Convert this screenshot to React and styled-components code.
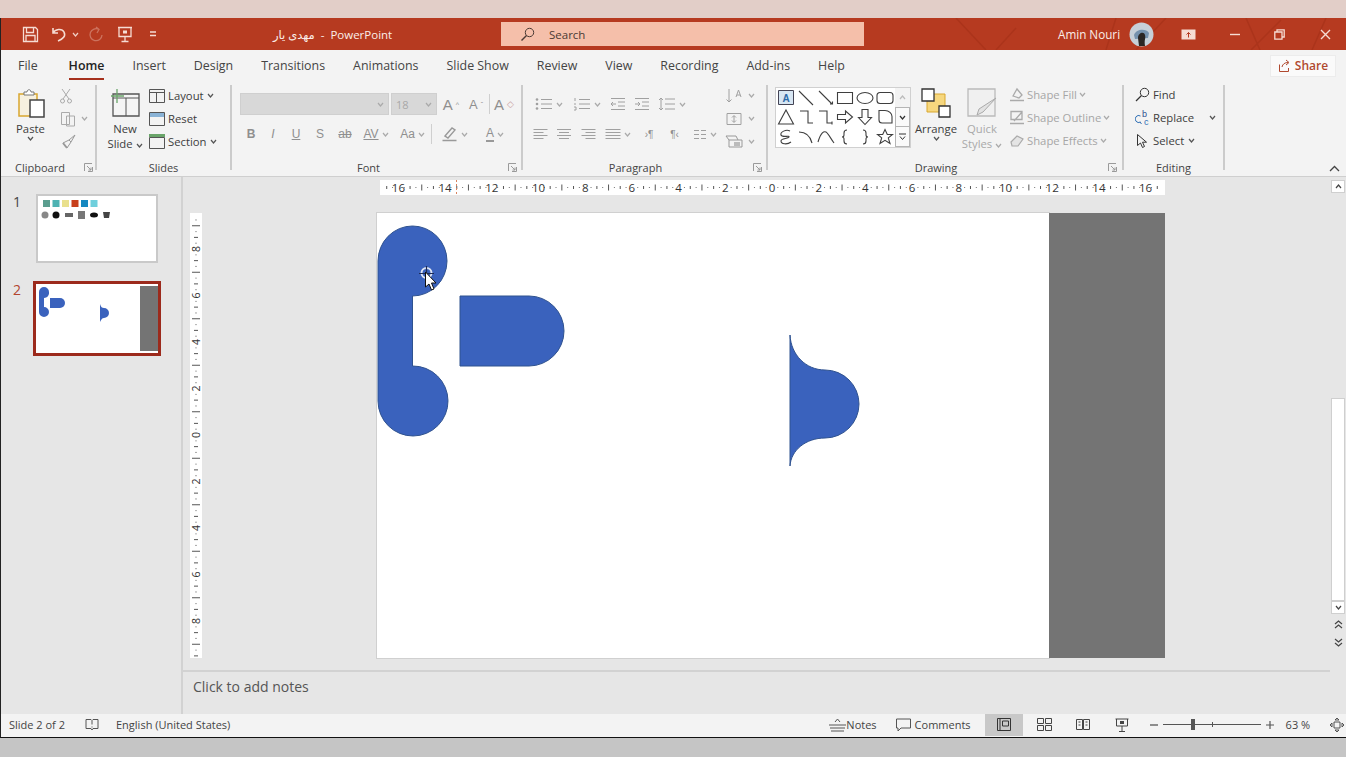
import React from 'react';
import styled, { createGlobalStyle } from 'styled-components';

const GlobalStyle = createGlobalStyle`
  html, body {
    margin: 0;
    padding: 0;
    height: 757px;
    overflow: hidden;
    background: #c5c5c5;
    font-family: "Open Sans", "DejaVu Sans", sans-serif;
  }
`;

const TopBand = styled.div`
  height: 18px;
  background: #e2cec8;
`;

const Window = styled.div`
  height: 719px;
  display: flex;
  flex-direction: column;
  border-left: 1px solid #222;
  border-bottom: 1px solid #111;
  box-sizing: content-box;
  background: #f3f3f3;
`;

/* title bar */
const TitleBar = styled.div`
  position: relative;
  height: 32px;
  flex: none;
  display: flex;
  align-items: center;
  background: #b63a20;
  color: #fbeee9;
  font-size: 11.5px;
  overflow: hidden;
`;

const Streaks = styled.svg`
  position: absolute;
  right: 0;
  top: 0;
  pointer-events: none;
`;

const Qat = styled.div`
  width: 272px;
  flex: none;
  display: flex;
  align-items: center;
  position: relative;
`;

const QatItem = styled.div`
  width: ${p => p.$w}px;
  margin-left: ${p => p.$ml || 0}px;
  flex: none;
  display: flex;
  justify-content: center;
  align-items: center;
  opacity: ${p => (p.$faded ? 0.35 : 1)};
`;

const DocTitle = styled.div`
  width: 228px;
  flex: none;
  white-space: pre;
  position: relative;
`;

const SearchBox = styled.div`
  position: relative;
  width: 363px;
  height: 24px;
  flex: none;
  display: flex;
  align-items: center;
  gap: 14px;
  padding-left: 19px;
  box-sizing: border-box;
  background: #f5bfaa;
  color: #4b3a34;
`;

const UserName = styled.div`
  position: relative;
  margin-left: 194px;
  width: 70px;
  flex: none;
  font-size: 11.7px;
`;

const WinBtn = styled.div`
  position: relative;
  width: ${p => p.$w}px;
  flex: none;
  display: flex;
  justify-content: center;
  align-items: center;
`;

/* tabs */
const TabRow = styled.div`
  height: 30px;
  flex: none;
  display: flex;
  align-items: center;
  padding: 1px 0 0 17px;
  box-sizing: border-box;
  font-size: 12.4px;
  color: #444;
`;

const Tab = styled.div`
  position: relative;
  margin-right: ${p => (p.$first ? 31 : 28)}px;
  white-space: nowrap;
  color: ${p => (p.$active ? '#222' : '#444')};
  font-weight: ${p => (p.$active ? 600 : 400)};

  &::after {
    content: '';
    display: ${p => (p.$active ? 'block' : 'none')};
    position: absolute;
    left: 0;
    right: 0;
    bottom: -6px;
    height: 2px;
    background: #a5301c;
  }
`;

const ShareBtn = styled.div`
  margin-left: auto;
  margin-right: 10px;
  width: 66px;
  height: 22px;
  display: flex;
  align-items: center;
  justify-content: center;
  gap: 4px;
  box-sizing: border-box;
  background: #fafafa;
  border: 1px solid #ececec;
  color: #b0492f;
  font-weight: 600;
  font-size: 12px;
`;

/* ribbon */
const Ribbon = styled.div`
  position: relative;
  height: 97px;
  flex: none;
  display: flex;
  background: #f3f3f3;
  border-bottom: 1px solid #cfcfcf;
  box-sizing: border-box;
  font-size: 11.3px;
  color: #3d3d3d;
`;

const Group = styled.div`
  width: ${p => p.$w}px;
  flex: none;
  display: flex;
  flex-direction: column;
`;

const GroupBody = styled.div`
  height: 78px;
  flex: none;
  display: flex;
  padding-left: ${p => p.$pl || 0}px;
  box-sizing: border-box;
`;

const GroupLabel = styled.div`
  position: relative;
  height: 19px;
  line-height: 19px;
  text-align: center;
  padding-right: ${p => p.$pr || 0}px;
  font-size: 11px;
  color: #444;
`;

const Launcher = styled.svg`
  position: absolute;
  right: ${p => p.$r || 4}px;
  top: 5px;
`;

const Sep = styled.div`
  width: 2px;
  flex: none;
  margin: 5px 0 6px;
  background: #cbcbcb;
`;

const BigBtn = styled.div`
  width: ${p => p.$w}px;
  flex: none;
  padding-top: 8px;
  display: flex;
  flex-direction: column;
  align-items: center;
  line-height: 15px;
  color: ${p => (p.$off ? '#a9a9a9' : '#3d3d3d')};
  white-space: nowrap;

  & > svg:first-child {
    margin-bottom: 3px;
  }
`;

const Stack = styled.div`
  flex: none;
  width: ${p => (p.$w ? `${p.$w}px` : 'auto')};
  margin-left: ${p => p.$ml || 0}px;
  padding-top: ${p => p.$pt ?? 4}px;
  display: flex;
  flex-direction: column;
`;

const SmallRow = styled.div`
  height: 23px;
  display: flex;
  align-items: center;
  gap: ${p => p.$gap ?? 3}px;
  white-space: nowrap;
  color: ${p => (p.$off ? '#a6a6a6' : '#3d3d3d')};
`;

const ToolRows = styled.div`
  flex: none;
  width: ${p => p.$w}px;
  padding-top: 13px;
  display: flex;
  flex-direction: column;
  gap: 8px;
`;

const ToolRow = styled.div`
  height: 22px;
  display: flex;
  align-items: center;
`;

const Combo = styled.div`
  width: ${p => p.$w}px;
  height: 22px;
  flex: none;
  margin-right: 2px;
  display: flex;
  align-items: center;
  justify-content: space-between;
  padding: 0 4px;
  box-sizing: border-box;
  background: #d8d8d8;
  border: 1px solid #cfcfcf;
  color: #a8a8a8;
  font-size: 11px;
`;

const Cell = styled.div`
  width: ${p => p.$w}px;
  flex: none;
  display: flex;
  align-items: center;
  justify-content: center;
  gap: 3px;
  color: #8f8f8f;
  font-size: ${p => p.$fs || 12}px;
  font-weight: ${p => p.$fw || 400};
  font-style: ${p => (p.$it ? 'italic' : 'normal')};
  font-family: "Liberation Sans", sans-serif;
  text-decoration: ${p => p.$deco || 'none'};
`;

const ThinSep = styled.div`
  width: 1px;
  height: 20px;
  flex: none;
  background: #cfcfcf;
`;

const Gallery = styled.div`
  margin-top: 7px;
  width: 136px;
  height: 61px;
  flex: none;
  display: flex;
  background: #fff;
  border: 1px solid #d0d0d0;
  box-sizing: border-box;
`;

const GalleryGrid = styled.div`
  width: 119px;
  flex: none;
  display: grid;
  grid-template-columns: repeat(6, 1fr);
  grid-template-rows: repeat(3, 1fr);
  justify-items: center;
  align-items: center;
`;

const GalleryScroll = styled.div`
  flex: 1;
  display: flex;
  flex-direction: column;
  background: #f3f3f3;
`;

const ScrollChip = styled.div`
  flex: 1;
  display: flex;
  align-items: center;
  justify-content: center;
  border: 1px solid ${p => (p.$plain ? 'transparent' : '#b5b5b5')};
  margin-top: -1px;
  background: ${p => (p.$plain ? 'transparent' : '#fafafa')};
`;

const Collapse = styled.svg`
  position: absolute;
  right: 6px;
  bottom: 4px;
`;

/* work area */
const Work = styled.div`
  flex: 1;
  min-height: 0;
  display: flex;
  background: #e6e6e6;
`;

const ThumbPane = styled.div`
  width: 182px;
  flex: none;
  display: flex;
  flex-direction: column;
  padding-top: 17px;
  box-sizing: border-box;
  border-right: 2px solid #d2d2d2;
`;

const ThumbRow = styled.div`
  display: flex;
  margin-top: ${p => p.$mt || 0}px;
`;

const ThumbNo = styled.div`
  width: ${p => p.$w}px;
  flex: none;
  padding: ${p => p.$pt || 0}px 0 0 12px;
  box-sizing: border-box;
  font-size: 14px;
  line-height: 16px;
  color: ${p => (p.$active ? '#b2452e' : '#444')};
`;

const Thumb = styled.div`
  position: relative;
  width: ${p => p.$w}px;
  height: ${p => p.$h}px;
  flex: none;
  box-sizing: border-box;
  background: #fff;
  border: ${p => (p.$active ? '3px solid #9c2a1c' : '2px solid #c9c9c9')};
`;

const Main = styled.div`
  flex: 1;
  min-width: 0;
  display: flex;
  flex-direction: column;
`;

const Editor = styled.div`
  flex: 1;
  min-height: 0;
  padding-top: 3px;
  box-sizing: border-box;
  display: flex;
  flex-direction: column;
`;

const HRulerWrap = styled.div`
  margin-left: 197px;
  height: 15px;
  flex: none;
`;

const Stage = styled.div`
  display: flex;
  margin-top: 18px;
  padding-left: 7px;
`;

const VRulerWrap = styled.div`
  width: 12px;
  height: 445px;
  flex: none;
  margin-right: 175px;
`;

const SlideArea = styled.div`
  position: relative;
  width: 788px;
  height: 445px;
  flex: none;
  display: flex;
`;

const Slide = styled.div`
  width: 672px;
  flex: none;
  background: #fff;
  box-shadow: 0 0 0 1px #d0d0d0;
`;

const GreyBlock = styled.div`
  flex: 1;
  background: #747474;
`;

const Shapes = styled.svg`
  position: absolute;
  left: 0;
  top: 0;
`;

const Notes = styled.div`
  height: 44px;
  flex: none;
  padding: 5px 0 0 10px;
  box-sizing: border-box;
  border-top: 2px solid #d2d2d2;
  font-size: 14px;
  line-height: 20px;
  color: #555;
`;

const VScroll = styled.div`
  width: 16px;
  flex: none;
  display: flex;
  flex-direction: column;
  align-items: center;
  padding-top: 3px;
  box-sizing: border-box;
`;

const ScrollBtn = styled.div`
  width: 14px;
  height: 13px;
  flex: none;
  display: flex;
  align-items: center;
  justify-content: center;
  background: #fff;
  border: 1px solid #cfcfcf;
  box-sizing: border-box;
`;

const ScrollThumb = styled.div`
  width: 14px;
  height: 203px;
  flex: none;
  margin-top: 205px;
  background: #fff;
  border: 1px solid #cfcfcf;
  box-sizing: border-box;
`;

const PageJump = styled.div`
  flex: none;
  margin-top: ${p => p.$mt}px;
  line-height: 0;
`;

/* status bar */
const Status = styled.div`
  height: 23px;
  flex: none;
  display: flex;
  align-items: center;
  padding-bottom: 2px;
  background: #f3f3f3;
  box-sizing: border-box;
  font-size: 11px;
  color: #444;
`;

const StatusText = styled.div`
  flex: none;
  white-space: nowrap;
  width: ${p => (p.$w ? `${p.$w}px` : 'auto')};
  margin-left: ${p => p.$ml || 0}px;
`;

const StatusIcon = styled.div`
  flex: none;
  display: flex;
  align-items: center;
  justify-content: center;
  height: 22px;
  width: ${p => p.$w}px;
  margin-left: ${p => p.$ml || 0}px;
  background: ${p => (p.$on ? '#c8c8c8' : 'transparent')};
`;

const Zoom = styled.div`
  position: relative;
  width: 98px;
  height: 1px;
  flex: none;
  margin-left: 4px;
  background: #555;
`;

const ZoomKnob = styled.div`
  position: absolute;
  left: ${p => p.$x}px;
  top: ${p => -p.$h / 2}px;
  width: ${p => p.$w}px;
  height: ${p => p.$h}px;
  background: #555;
`;

/* drawings */
const S = ({ w = 16, h = 16, vb, children }) => (
  <svg width={w} height={h} viewBox={vb || `0 0 ${w} ${h}`} fill="none" stroke="currentColor" strokeWidth="1">
    {children}
  </svg>
);

const Chev = ({ c = '#555', up }) => (
  <svg width="7" height="5" viewBox="0 0 7 5" fill="none" stroke={c} strokeWidth="1.2">
    <path d={up ? 'M1 4l2.5-3L6 4' : 'M1 1l2.5 3L6 1'} />
  </svg>
);

const Launch = ({ r }) => (
  <Launcher $r={r} width="9" height="9" viewBox="0 0 9 9" fill="none" stroke="#9a9a9a" strokeWidth="1">
    <path d="M.5 8V.5H8M8.5 4v4.5H4M3 3l4 4M7 4.5V7H4.5" />
  </Launcher>
);

const lines = (arr, color = '#a0a0a0') => (
  <g stroke={color}>{arr.map((d, i) => <path key={i} d={d} />)}</g>
);

const Bullets = () => (
  <S w={18} h={14}>
    <g fill="#a0a0a0" stroke="none">
      <circle cx="2" cy="2.5" r="1.3" /><circle cx="2" cy="7" r="1.3" /><circle cx="2" cy="11.5" r="1.3" />
    </g>
    {lines(['M6 2.5h11', 'M6 7h11', 'M6 11.5h11'])}
  </S>
);

const Numbers = () => (
  <S w={18} h={14}>
    {lines(['M2 1v3M1 7h2M1 10h2v3H1', 'M6 2.5h11', 'M6 7h11', 'M6 11.5h11'])}
  </S>
);

const Outdent = ({ flip }) => (
  <S w={16} h={14}>
    {lines(['M1 1.5h14', 'M1 12.5h14', 'M8 5h7', 'M8 9h7', flip ? 'M1 7h5M4 5l2 2-2 2' : 'M6 7H1M3 5L1 7l2 2'])}
  </S>
);

const Spacing = () => (
  <S w={18} h={16}>
    {lines(['M3 2v12M1 4l2-2 2 2M1 12l2 2 2-2', 'M7 3h10', 'M7 8h10', 'M7 13h10'])}
  </S>
);

const Align = ({ mode }) => {
  const w = [14, 10, 14, 10];
  return (
    <S w={16} h={12}>
      {lines(w.map((l, i) => {
        const y = 1.5 + i * 3;
        const len = mode === 'j' ? 15 : l;
        const x = mode === 'c' ? (16 - len) / 2 : mode === 'r' ? 15.5 - len : 0.5;
        return `M${x} ${y}h${len}`;
      }))}
    </S>
  );
};

const Shape = ({ d, fill }) => (
  <svg width="18" height="18" viewBox="0 0 18 18" fill={fill || 'none'} stroke="#3f3f3f" strokeWidth="1.1">
    <path d={d} />
  </svg>
);

const galleryShapes = [
  null,
  'M2 2l14 14',
  'M2 2l13 13M13 15h2.5v-2.5',
  'M1.5 3.5h15v11h-15z',
  'M9 3.5c4.5 0 8 2.5 8 5.5s-3.5 5.5-8 5.5S1 12 1 9s3.5-5.5 8-5.5z',
  'M4 3.5h10a3 3 0 0 1 3 3v5a3 3 0 0 1-3 3H4a3 3 0 0 1-3-3v-5a3 3 0 0 1 3-3z',
  'M9 2l7.5 14h-15z',
  'M3 3h8v12h5',
  'M2 3h8v12h5M15 13.5v3',
  'M1.5 6.5h8V3L16.5 9l-7 6v-3.5h-8z',
  'M6 1.5h6v8h3.5L9 16.5 2.5 9.5H6z',
  'M3 2.5h6c4 0 7 3 7 6v6.500H6c-2 0-3-1-3-3z',
  'M13 3C9 1 3 4 4 7s9 0 8 2-8 1-8 4 6 4 10 1',
  'M2 4c7 0 11 3 13 11',
  'M1 14C4 4 7 3 9 4s5 7 8 11',
  'M11 2C9 2 8 3 8 5v2c0 1-1 2-2 2 1 0 2 1 2 2v2c0 2 1 3 3 3',
  'M7 2c2 0 3 1 3 3v2c0 1 1 2 2 2-1 0-2 1-2 2v2c0 2-1 3-3 3',
  'M9 1.5l2.3 5h5.2l-4.2 3.4 1.7 5.6L9 12.3l-5 3.2 1.7-5.6L1.5 6.5h5.2z',
];

const tabs = ['Insert', 'Design', 'Transitions', 'Animations', 'Slide Show', 'Review', 'View', 'Recording', 'Add-ins', 'Help'];

const HRuler = () => {
  const ticks = [];
  const labels = [];
  const mid = 392;
  const unit = 23.35;
  for (let i = -68; i <= 68; i++) {
    const x = mid + (i * unit) / 4;
    if (x < 2 || x > 783) continue;
    if (i % 8 === 0) {
      labels.push(
        <text key={i} x={x} y="11.5" textAnchor="middle" fontSize="11.5" fill="#333" stroke="none">
          {Math.abs(i / 4)}
        </text>
      );
    } else if (i % 4 === 0) {
      ticks.push(<path key={i} d={`M${x} 4.5v6`} stroke="#555" />);
    } else if (i % 2 === 0) {
      ticks.push(<path key={i} d={`M${x} 6v3`} stroke="#555" />);
    } else {
      ticks.push(<circle key={i} cx={x} cy="7.5" r=".6" fill="#666" stroke="none" />);
    }
  }
  return (
    <svg width="785" height="15" viewBox="0 0 785 15" style={{ display: 'block', background: '#fff' }}>
      {ticks}
      {labels}
      <path d="M76.5 0v15" stroke="#d9825f" strokeDasharray="2 2" />
    </svg>
  );
};

const VRuler = () => {
  const ticks = [];
  const labels = [];
  const mid = 222;
  const unit = 23.25;
  for (let i = -38; i <= 38; i++) {
    const y = mid + (i * unit) / 4;
    if (y < 2 || y > 443) continue;
    if (i % 8 === 0) {
      labels.push(
        <text key={i} x="0" y="0" transform={`translate(10 ${y}) rotate(-90)`} textAnchor="middle" fontSize="10.5" fill="#333" stroke="none">
          {Math.abs(i / 4)}
        </text>
      );
    } else if (i % 4 === 0) {
      ticks.push(<path key={i} d={`M2 ${y}h8`} stroke="#555" />);
    } else if (i % 2 === 0) {
      ticks.push(<path key={i} d={`M4 ${y}h4`} stroke="#555" />);
    } else {
      ticks.push(<circle key={i} cx="6" cy={y} r=".6" fill="#666" stroke="none" />);
    }
  }
  return (
    <svg width="12" height="445" viewBox="0 0 12 445" style={{ display: 'block', background: '#fff', overflow: 'visible' }}>
      {ticks}
      {labels}
    </svg>
  );
};

export default function App() {
  return (
    <>
      <GlobalStyle />
      <TopBand />
      <Window>
        <TitleBar>
          <Streaks width="480" height="32" viewBox="0 0 480 32" fill="none" stroke="#ab341b" strokeWidth="1.5">
            <path d="M90 0l30 32M150 10l-20 22M250 0l-10 32M300 0l-30 32M380 0l14 32M385 32l30-30M460 0l-14 32" />
          </Streaks>
          <Qat>
            <QatItem $w={17} $ml={21}>
              <S w={17} h={17}>
                <path d="M1.5 1.5h12l2 2v12h-14zM4.5 1.5v5h7v-5M4 15.5v-6h9v6" stroke="#f6dcd3" strokeWidth="1.3" />
              </S>
            </QatItem>
            <QatItem $w={18} $ml={10}>
              <S w={17} h={16}>
                <path d="M3 2v5h5M3 7c2-4 9-5 11-1s-1 7-6 9" stroke="#f6dcd3" strokeWidth="1.6" />
              </S>
            </QatItem>
            <QatItem $w={10} $ml={3}><Chev c="#f0cfc5" /></QatItem>
            <QatItem $w={18} $ml={7} $faded>
              <S w={17} h={17}>
                <path d="M14 9a6 6 0 1 1-3-5.5M8 1l3 2.5L9 7" stroke="#f6dcd3" strokeWidth="1.3" />
              </S>
            </QatItem>
            <QatItem $w={18} $ml={11}>
              <S w={16} h={17}>
                <path d="M1 1.5h14M2 1.5v9h12v-9M8 10.5v5M4.5 15.5h7" stroke="#f6dcd3" strokeWidth="1.3" />
                <path d="M6 4.5h4v3H6z" fill="#f6dcd3" stroke="none" />
              </S>
            </QatItem>
            <QatItem $w={18} $ml={10}>
              <S w={8} h={8}>
                <path d="M1 2h6M1 5.5h6" stroke="#f6dcd3" strokeWidth="1.3" />
              </S>
            </QatItem>
          </Qat>
          <DocTitle><span dir="rtl">مهدی یار</span>{'  -  PowerPoint'}</DocTitle>
          <SearchBox>
            <S w={15} h={15}>
              <circle cx="9.5" cy="5.5" r="4.2" stroke="#4b3a34" />
              <path d="M6.5 8.5L1.5 13.5" stroke="#4b3a34" strokeWidth="1.4" />
            </S>
            Search
          </SearchBox>
          <UserName>Amin Nouri</UserName>
          <WinBtn $w={27}>
            <svg width="25" height="25" viewBox="0 0 25 25">
              <circle cx="12.5" cy="12.5" r="12" fill="#c6d0d8" />
              <path d="M5 13c2-6 12-7 15-2l-1 5-13 1z" fill="#7592ad" />
              <path d="M10 24l-1-8c0-5 6-7 7-3s-1 4 0 11z" fill="#2a2623" />
            </svg>
          </WinBtn>
          <WinBtn $w={66}>
            <S w={15} h={11}>
              <path d="M.5.5h14v10H.5z" fill="#f6dcd3" stroke="none" />
              <path d="M7.5 8.5v-5M5.5 5.5l2-2 2 2" stroke="#b63a20" />
            </S>
          </WinBtn>
          <WinBtn $w={28}>
            <S w={10} h={3}><path d="M0 1.5h10" stroke="#f6dcd3" strokeWidth="1.4" /></S>
          </WinBtn>
          <WinBtn $w={60}>
            <S w={11} h={11}>
              <path d="M.8 3h7.2v7.2H.8zM3 3V.8h7.2V8H8" stroke="#f6dcd3" strokeWidth="1.3" />
            </S>
          </WinBtn>
          <WinBtn $w={32}>
            <S w={11} h={11}>
              <path d="M1 1l9 9M10 1l-9 9" stroke="#f6dcd3" strokeWidth="1.4" />
            </S>
          </WinBtn>
        </TitleBar>

        <TabRow>
          <Tab $first>File</Tab>
          <Tab $active>Home</Tab>
          {tabs.map(t => <Tab key={t}>{t}</Tab>)}
          <ShareBtn>
            <S w={13} h={13}>
              <path d="M1.5 5.5v7h9V9M4 8c.5-3 3-4.5 6-4.5M8 1l3 2.5L8 6" stroke="#b0492f" />
            </S>
            Share
          </ShareBtn>
        </TabRow>

        <Ribbon>
          <Group $w={94}>
            <GroupBody>
              <BigBtn $w={59}>
                <svg width="30" height="30" viewBox="0 0 30 30" fill="none">
                  <path d="M3 6h18v22H3z" fill="#f6f0df" stroke="#d9a72f" strokeWidth="1.5" />
                  <path d="M8 7V4h3c0-3 4-3 4 0h3v3z" fill="#fff" stroke="#777" />
                  <path d="M14 12h14v17H14z" fill="#fff" stroke="#444" strokeWidth="1.5" />
                </svg>
                Paste
                <Chev />
              </BigBtn>
              <Stack>
                <SmallRow>
                  <S w={12} h={16}><path d="M2 1l7 10M10 1L3 11" stroke="#aaa" /><circle cx="2.5" cy="13" r="2" stroke="#aaa" /><circle cx="9.5" cy="13" r="2" stroke="#aaa" /></S>
                </SmallRow>
                <SmallRow $gap={5}>
                  <S w={16} h={16}><path d="M1.5 1.5h8v12h-8zM6.5 5h8v10h-8z" stroke="#aaa" fill="#f3f3f3" /></S>
                  <Chev c="#aaa" />
                </SmallRow>
                <SmallRow>
                  <S w={16} h={16}><path d="M15 1L9 6l2 2zM9 6L3 9l4 5 4-6" stroke="#999" /><path d="M3 9l4 5" stroke="#999" strokeWidth="2" /></S>
                </SmallRow>
              </Stack>
            </GroupBody>
            <GroupLabel $pr={16}>Clipboard<Launch r={2} /></GroupLabel>
          </Group>
          <Sep />
          <Group $w={133}>
            <GroupBody $pl={8}>
              <BigBtn $w={40}>
                <svg width="30" height="30" viewBox="0 0 30 30" fill="none">
                  <path d="M3 6h26v22H3z" fill="#f5f5f5" stroke="#555" strokeWidth="1.3" />
                  <path d="M3 10h26M16 10v18" stroke="#555" />
                  <path d="M7 1v14M1 8h13" stroke="#6aa56a" strokeWidth="1.3" />
                </svg>
                New
                <span>Slide <Chev /></span>
              </BigBtn>
              <Stack $ml={4}>
                <SmallRow>
                  <S w={16} h={14}><path d="M.5.5h15v13H.5zM.5 3.5h15M7.5 3.5v10" stroke="#555" /></S>
                  Layout <Chev />
                </SmallRow>
                <SmallRow>
                  <S w={16} h={14}><path d="M.5.5h15v13H.5z" stroke="#555" /><path d="M1 1h14v4H1z" fill="#8ab3d6" stroke="none" /></S>
                  Reset
                </SmallRow>
                <SmallRow>
                  <S w={16} h={15}><path d="M.5 3.5h15v11H.5z" stroke="#555" /><path d="M0 0h16v3H0z" fill="#6aa56a" stroke="none" /></S>
                  Section <Chev />
                </SmallRow>
              </Stack>
            </GroupBody>
            <GroupLabel>Slides</GroupLabel>
          </Group>
          <Sep />
          <Group $w={289}>
            <GroupBody $pl={8}>
              <ToolRows $w={281}>
                <ToolRow>
                  <Combo $w={149}><span /><Chev c="#aaa" /></Combo>
                  <Combo $w={46}>18<Chev c="#aaa" /></Combo>
                  <Cell $w={24} $fs={15}>A<sup style={{ fontSize: 7 }}>^</sup></Cell>
                  <Cell $w={26} $fs={13}>A<sup style={{ fontSize: 7 }}>ˇ</sup></Cell>
                  <ThinSep />
                  <Cell $w={28} $fs={15}>A<sub style={{ fontSize: 9, color: '#c9a0a0' }}>◇</sub></Cell>
                </ToolRow>
                <ToolRow>
                  <Cell $w={22} $fw={700}>B</Cell>
                  <Cell $w={22} $it>I</Cell>
                  <Cell $w={24} $deco="underline">U</Cell>
                  <Cell $w={24}>S</Cell>
                  <Cell $w={26} $deco="line-through">ab</Cell>
                  <Cell $w={36} $deco="underline">AV <Chev c="#aaa" /></Cell>
                  <Cell $w={37}>Aa <Chev c="#aaa" /></Cell>
                  <ThinSep />
                  <Cell $w={44}>
                    <S w={17} h={16}><path d="M4 10l7-8 3 2-7 8zM1.5 14.5h14" stroke="#999" strokeWidth="1.4" /></S>
                    <Chev c="#aaa" />
                  </Cell>
                  <Cell $w={38}>
                    <span style={{ borderBottom: '2px solid #999' }}>A</span>
                    <Chev c="#aaa" />
                  </Cell>
                </ToolRow>
              </ToolRows>
            </GroupBody>
            <GroupLabel $pr={16}>Font<Launch r={4} /></GroupLabel>
          </Group>
          <Sep />
          <Group $w={243}>
            <GroupBody $pl={7}>
              <ToolRows $w={195}>
                <ToolRow>
                  <Cell $w={38}><Bullets /><Chev c="#aaa" /></Cell>
                  <Cell $w={38}><Numbers /><Chev c="#aaa" /></Cell>
                  <Cell $w={24}><Outdent /></Cell>
                  <Cell $w={24}><Outdent flip /></Cell>
                  <Cell $w={36}><Spacing /><Chev c="#aaa" /></Cell>
                </ToolRow>
                <ToolRow>
                  <Cell $w={22}><Align mode="l" /></Cell>
                  <Cell $w={24}><Align mode="c" /></Cell>
                  <Cell $w={24}><Align mode="r" /></Cell>
                  <Cell $w={36}><Align mode="j" /><Chev c="#aaa" /></Cell>
                  <Cell $w={26} $fs={10}>›¶</Cell>
                  <Cell $w={25} $fs={10}>¶‹</Cell>
                  <Cell $w={35}>
                    <S w={14} h={11}>{lines(['M1 1.5h5M8 1.5h5M1 5.5h5M8 5.5h5M1 9.5h5M8 9.5h5'])}</S>
                    <Chev c="#aaa" />
                  </Cell>
                </ToolRow>
              </ToolRows>
              <Stack>
                <SmallRow $gap={5}>
                  <S w={18} h={16}>{lines(['M4 1v13M1.5 11.5L4 14l2.5-2.5', 'M11 9l2.5-7L16 9M12 7h3'])}</S>
                  <Chev c="#aaa" />
                </SmallRow>
                <SmallRow $gap={5}>
                  <S w={18} h={16}>{lines(['M2 2.5h14v11H2z', 'M9 5v6M7 6.5L9 4.5l2 2M7 9.5l2 2 2-2'])}</S>
                  <Chev c="#aaa" />
                </SmallRow>
                <SmallRow $gap={5}>
                  <S w={18} h={16}>{lines(['M1 2h10l2 4H4zM4 6v7h13V6h-4'], '#999')}<path d="M9 8h6v4H9z" fill="#bbb" stroke="none" /></S>
                  <Chev c="#aaa" />
                </SmallRow>
              </Stack>
            </GroupBody>
            <GroupLabel $pr={18}>Paragraph<Launch r={4} /></GroupLabel>
          </Group>
          <Sep />
          <Group $w={354}>
            <GroupBody $pl={7}>
              <Gallery>
                <GalleryGrid>
                  {galleryShapes.map((d, i) => (
                    d
                      ? <Shape key={i} d={d} />
                      : (
                        <svg key={i} width="16" height="15" viewBox="0 0 16 15">
                          <path d="M.5.5h15v14H.5z" fill="#d7e6f3" stroke="#445" />
                          <text x="8" y="11.5" textAnchor="middle" fontSize="10" fontWeight="700" fill="#2c6aa8" fontFamily="Liberation Sans">A</text>
                        </svg>
                      )
                  ))}
                </GalleryGrid>
                <GalleryScroll>
                  <ScrollChip $plain><Chev c="#bbb" up /></ScrollChip>
                  <ScrollChip><Chev c="#333" /></ScrollChip>
                  <ScrollChip>
                    <S w={7} h={7}><path d="M0 1h7M1 3.5l2.5 3 2.5-3" stroke="#333" /></S>
                  </ScrollChip>
                </GalleryScroll>
              </Gallery>
              <BigBtn $w={50}>
                <svg width="30" height="30" viewBox="0 0 30 30" fill="none">
                  <path d="M6 6h18v18H6z" fill="#f6d77e" stroke="#d9a72f" />
                  <path d="M1 1h12v12H1z" fill="#fff" stroke="#333" strokeWidth="1.3" />
                  <path d="M18 18h11v11H18z" fill="#fff" stroke="#333" strokeWidth="1.3" />
                </svg>
                Arrange
                <Chev />
              </BigBtn>
              <BigBtn $w={42} $off>
                <svg width="30" height="30" viewBox="0 0 30 30" fill="none">
                  <path d="M1 1h27v27H1z" fill="#f0f0f0" stroke="#bbb" strokeWidth="1.3" />
                  <path d="M29 10L16 24l-6 3 2-6z" fill="#e2e2e2" stroke="#aaa" />
                </svg>
                Quick
                <span>Styles <Chev c="#aaa" /></span>
              </BigBtn>
              <Stack $ml={6} $pt={3}>
                <SmallRow $off $gap={2}>
                  <S w={16} h={16}><path d="M4 9l4-7 5 6-3 3zM1 13.5h14" stroke="#aaa" strokeWidth="1.3" /></S>
                  Shape Fill <Chev c="#aaa" />
                </SmallRow>
                <SmallRow $off $gap={2}>
                  <S w={16} h={16}><path d="M2 1.5h11v8H2zM5 11l8-9M1 13.5h14" stroke="#aaa" strokeWidth="1.3" /></S>
                  Shape Outline <Chev c="#aaa" />
                </SmallRow>
                <SmallRow $off $gap={2}>
                  <S w={16} h={16}><path d="M2 9l6-6 6 3-5 7H3z" stroke="#aaa" fill="#e4e4e4" strokeWidth="1.2" /></S>
                  Shape Effects <Chev c="#aaa" />
                </SmallRow>
              </Stack>
            </GroupBody>
            <GroupLabel $pr={18}>Drawing<Launch r={5} /></GroupLabel>
          </Group>
          <Sep />
          <Group $w={99}>
            <GroupBody $pl={11}>
              <Stack $pt={3}>
                <SmallRow>
                  <S w={15} h={15}><circle cx="9.5" cy="5.5" r="4.2" stroke="#333" /><path d="M6.5 8.5L1 14" stroke="#333" strokeWidth="1.3" /></S>
                  Find
                </SmallRow>
                <SmallRow $gap={2}>
                  <svg width="16" height="17" viewBox="0 0 16 17" fill="none">
                    <path d="M5.5 7a3.5 3.5 0 1 0 0 6M5 13l1.5 2" stroke="#2e6fb5" />
                    <text x="7" y="8" fontSize="9" fill="#2f4f8f" fontFamily="Liberation Sans">b</text>
                    <text x="9" y="15.5" fontSize="9" fill="#2e6fb5" fontFamily="Liberation Sans">c</text>
                  </svg>
                  Replace
                  <span style={{ marginLeft: 13, lineHeight: 0 }}><Chev /></span>
                </SmallRow>
                <SmallRow $gap={4}>
                  <S w={14} h={16}><path d="M2.5 1.5v11l3-2.5 2 4.5 2-1-2-4.3 4 0z" stroke="#333" /></S>
                  Select <Chev />
                </SmallRow>
              </Stack>
            </GroupBody>
            <GroupLabel>Editing</GroupLabel>
          </Group>
          <Sep />
          <Collapse width="11" height="7" viewBox="0 0 11 7" fill="none" stroke="#444" strokeWidth="1.3">
            <path d="M1 6l4.5-4.500L10 6" />
          </Collapse>
        </Ribbon>

        <Work>
          <ThumbPane>
            <ThumbRow>
              <ThumbNo $w={35} $pt={0}>1</ThumbNo>
              <Thumb $w={122} $h={69}>
                <svg width="118" height="65" viewBox="0 0 118 65">
                  {['#5b9e8f', '#4fb3b3', '#e9e08d', '#c8401c', '#1688c0', '#6fcfdc'].map((c, i) => (
                    <rect key={c} x={5 + i * 9.5} y="4" width="7" height="7" fill={c} />
                  ))}
                  <circle cx="7" cy="19" r="3.5" fill="#888" />
                  <circle cx="18" cy="19" r="3.5" fill="#111" />
                  <rect x="27" y="17" width="8" height="4" fill="#666" />
                  <rect x="40" y="15" width="7" height="8" fill="#777" />
                  <ellipse cx="56" cy="19" rx="4" ry="2.5" fill="#111" />
                  <path d="M65 16h7l-1 6h-5z" fill="#444" />
                </svg>
              </Thumb>
            </ThumbRow>
            <ThumbRow $mt={18}>
              <ThumbNo $w={32} $pt={1} $active>2</ThumbNo>
              <Thumb $w={128} $h={75} $active>
                <svg width="122" height="69" viewBox="0 0 122 69">
                  <path d="M3 8a5 5 0 0 1 10 0 5 5 0 0 1-5 6v9a5 5 0 1 1-5 5z" fill="#3a62bd" />
                  <path d="M14 13h10a5 5 0 0 1 0 10H14z" fill="#3a62bd" transform="translate(0 1)" />
                  <path d="M64 20c1 3 2 4 4 4a5 5 0 0 1 0 10c-2 0-3 2-4 4z" fill="#3a62bd" />
                  <rect x="104" y="2" width="18" height="65" fill="#747474" />
                </svg>
              </Thumb>
            </ThumbRow>
          </ThumbPane>
          <Main>
            <Editor>
              <HRulerWrap><HRuler /></HRulerWrap>
              <Stage>
                <VRulerWrap><VRuler /></VRulerWrap>
                <SlideArea>
                  <Slide />
                  <GreyBlock />
                  <Shapes width="788" height="445" viewBox="377 213 788 445" fill="#3a62bd" stroke="#2f528f" strokeWidth="1">
                    <path d="M412.5 226a34.5 35 0 0 1 0 70v70a35 35 0 1 1-34.5 35V261a34.5 35 0 0 1 34.5-35z" />
                    <path d="M460 296h69a35 35 0 0 1 0 70h-69z" />
                    <path d="M790 335c1 20 16 35 35 35a34 34 0 0 1 0 68c-19 0-34 12-35 28z" />
                    <g>
                      <circle cx="426.5" cy="273" r="5" fill="none" stroke="#dfe6f5" strokeWidth="2" />
                      <path d="M426.5 266v15M419 273.5h15" stroke="#1d2b55" strokeWidth="1.2" />
                      <path d="M425.5 272v15l3.5-3 2.5 6 2.5-1-2.5-6h4.5z" fill="#fff" stroke="#111" strokeWidth="1" />
                    </g>
                  </Shapes>
                </SlideArea>
              </Stage>
            </Editor>
            <Notes>Click to add notes</Notes>
          </Main>
          <VScroll>
            <ScrollBtn><Chev c="#444" up /></ScrollBtn>
            <ScrollThumb />
            <ScrollBtn><Chev c="#444" /></ScrollBtn>
            <PageJump $mt={6}>
              <S w={9} h={10}><path d="M1 4l3.5-3L8 4M1 8l3.5-3L8 8" stroke="#444" strokeWidth="1.2" /></S>
            </PageJump>
            <PageJump $mt={7}>
              <S w={9} h={10}><path d="M1 2l3.5 3L8 2M1 6l3.5 3L8 6" stroke="#444" strokeWidth="1.2" /></S>
            </PageJump>
          </VScroll>
        </Work>

        <Status>
          <StatusText $ml={8} $w={72}>Slide 2 of 2</StatusText>
          <StatusIcon $w={22}>
            <S w={14} h={13}><path d="M6 1.5H1v9h5l1 1.5 1-1.5h5v-9H8M7 1.5v5M7 8.5v1" stroke="#555" /></S>
          </StatusIcon>
          <StatusText $ml={13}>English (United States)</StatusText>
          <StatusIcon $w={18} $ml={598}>
            <S w={17} h={15}><path d="M0 8h17M1 11h15M2 14h13M6 5l2.5-3L11 5" stroke="#555" /></S>
          </StatusIcon>
          <StatusText>Notes</StatusText>
          <StatusIcon $w={18} $ml={18}>
            <S w={15} h={14}><path d="M.5 1h14v9H5l-3 3v-3H.5z" stroke="#555" /></S>
          </StatusIcon>
          <StatusText $ml={2}>Comments</StatusText>
          <StatusIcon $w={38} $ml={14} $on>
            <S w={14} h={13}><path d="M.5.5h13v12H.5zM3 .5v12" stroke="#333" /><path d="M5.5 3h6v5h-6z" stroke="#333" /></S>
          </StatusIcon>
          <StatusIcon $w={15} $ml={14}>
            <S w={15} h={13}><path d="M.5.5h6v5h-6zM8.5.5h6v5h-6zM.5 7.5h6v5h-6zM8.5 7.5h6v5h-6z" stroke="#444" /></S>
          </StatusIcon>
          <StatusIcon $w={15} $ml={24}>
            <S w={14} h={13}><path d="M.5 1.5h6v10h-6zM7.5 1.5h6v10h-6zM2.5 4h2M2.5 7h2M9.5 4h2M9.5 7h2" stroke="#444" /></S>
          </StatusIcon>
          <StatusIcon $w={15} $ml={24}>
            <S w={14} h={14}><path d="M.5 1h13M1.5 1v7h11V1M7 8v5M4 13.5h6" stroke="#444" /><path d="M5 3h4v3H5z" fill="#444" stroke="none" /></S>
          </StatusIcon>
          <StatusIcon $w={10} $ml={19}>
            <S w={8} h={2}><path d="M0 1h8" stroke="#555" strokeWidth="1.3" /></S>
          </StatusIcon>
          <Zoom>
            <ZoomKnob $x={28} $w={4} $h={11} />
            <ZoomKnob $x={49} $w={1} $h={5} />
          </Zoom>
          <StatusIcon $w={10} $ml={4}>
            <S w={8} h={8}><path d="M0 4h8M4 0v8" stroke="#555" strokeWidth="1.2" /></S>
          </StatusIcon>
          <StatusText $ml={11} $w={30}>63 %</StatusText>
          <StatusIcon $w={14} $ml={14}>
            <S w={14} h={14}><path d="M4 4h6v6H4zM7 0l2 2H5zM7 14l2-2H5zM0 7l2-2v4zM14 7l-2-2v4z" stroke="#444" strokeWidth=".9" /></S>
          </StatusIcon>
        </Status>
      </Window>
    </>
  );
}
